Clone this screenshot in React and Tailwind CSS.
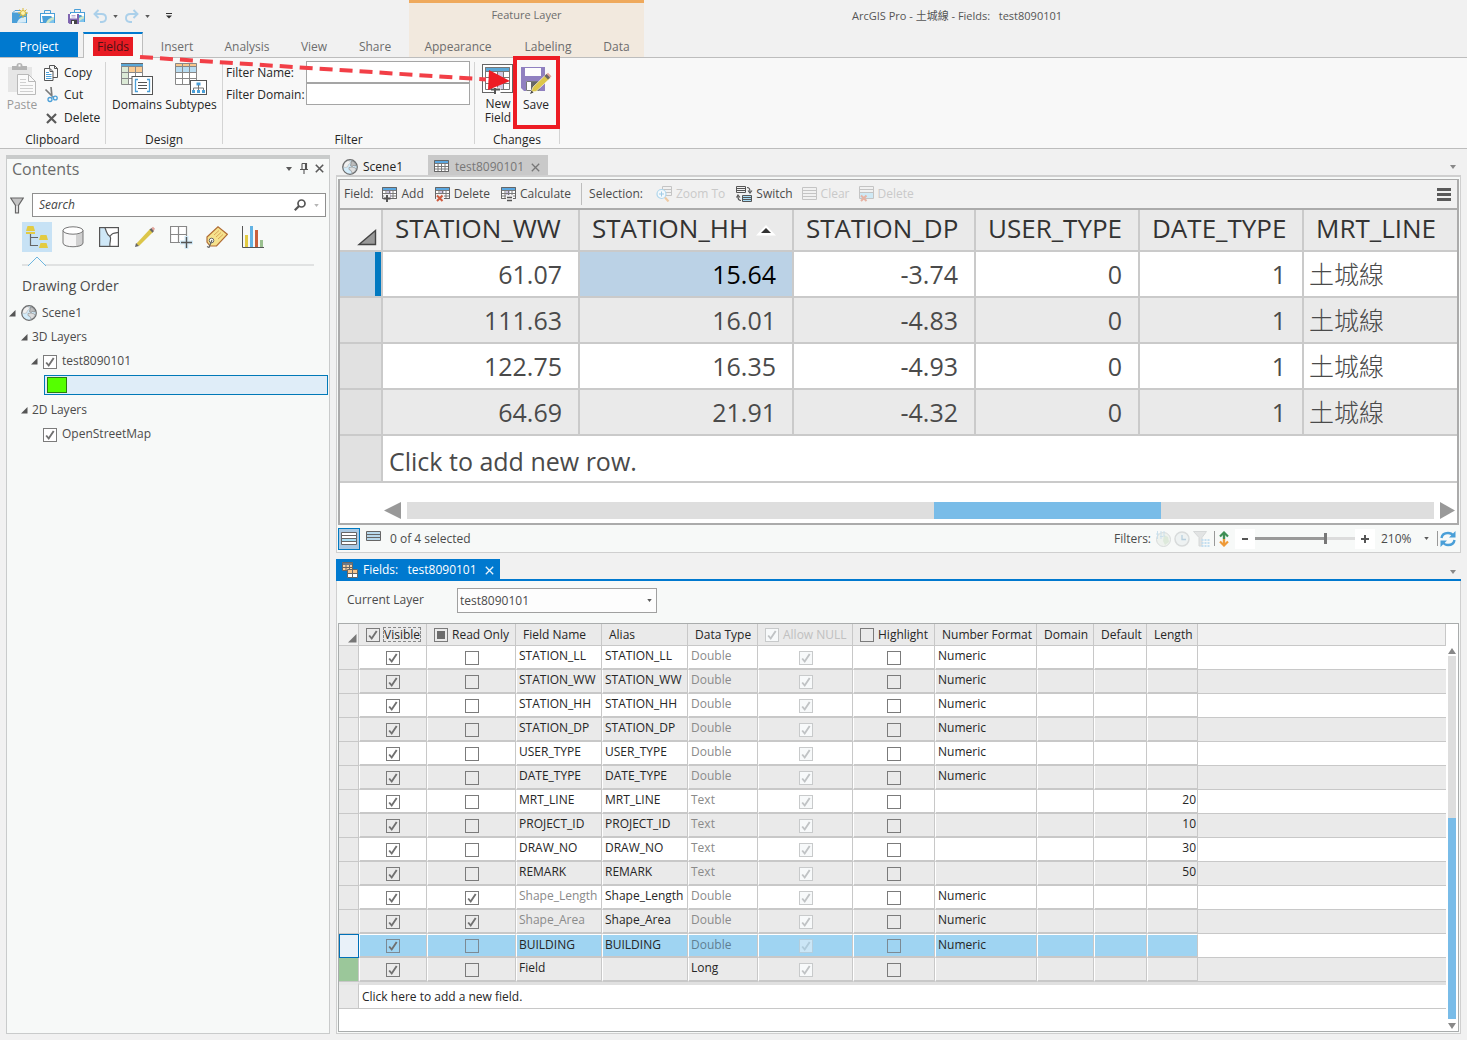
import React from "react";

const Svg = ({ w = 16, h = 16, vw = w, vh = h, className = "", children }) => (
  <svg width={w} height={h} viewBox={`0 0 ${vw} ${vh}`} className={`shrink-0 ${className}`} fill="none" aria-hidden="true">
    {children}
  </svg>
);

const Caret = ({ color = "#5a5a5a", w = 6, h = 4 }) => (
  <Svg w={w} h={h} vw={6} vh={4}>
    <path d="M0 0h6L3 4z" fill={color} />
  </Svg>
);

const Close = ({ color = "#5a5a5a", size = 9, stroke = 1.6 }) => (
  <Svg w={size} h={size} vw={9} vh={9}>
    <path d="M.8.8l7.4 7.4M8.2.8L.8 8.2" stroke={color} strokeWidth={stroke} />
  </Svg>
);

/* ---------- quick access icons ---------- */
const Briefcase = ({ x = 0, y = 0 }) => (
  <g transform={`translate(${x} ${y})`}>
    <path d="M4.500 4V1.500h6V4" stroke="#4a9fd8" />
    <rect x=".5" y="4.500" width="14" height="9" fill="#fff" stroke="#4a9fd8" />
    <path d="M2 7h9l3 3v3.500H3z" fill="#4a9fd8" />
    <path d="M6 14c1-3.500 4-5 8-6v6z" fill="#cfe6c8" />
    <path d="M9 14c1-2 3-3 5-3.500V14z" fill="#7fc4ec" />
  </g>
);
const NewProject = () => (
  <Svg>
    <rect x=".5" y="5" width="14" height="9.500" fill="#4a9fd8" stroke="#4a9fd8" />
    <path d="M1 4.500l2-2h5" stroke="#4a9fd8" />
    <path d="M5 15c1-4 4-6 9-6v5.500z" fill="#d6ebf7" />
    <path d="M11 0v10M6 5h10M7.500 1.500l7 7M14.500 1.500l-7 7" stroke="#d9b93a" />
    <circle cx="11" cy="5" r="2.500" fill="#fdf3b0" stroke="#d9b93a" />
  </Svg>
);
const OpenProject = () => (
  <Svg>
    <Briefcase y={1} />
  </Svg>
);
const SaveProject = () => (
  <Svg w={17}>
    <Briefcase x={2} y={0} />
    <path d="M0 6h11v10H1.500L0 14.500z" fill="#8066b0" />
    <path d="M2 6h7v4.500H2z" fill="#fff" />
    <path d="M3.500 7.500h4M3.500 9h4" stroke="#b9aed4" />
    <path d="M3 12h6v4H3z" fill="#444" />
    <path d="M4 13h2v3H4z" fill="#fff" />
  </Svg>
);
const Undo = ({ flip }) => (
  <Svg w={14} h={14} className={flip ? "-scale-x-100" : ""}>
    <path d="M5.500 1L1.500 5l4 4M2 5h6.500c3 0 4.500 1.800 4.500 4s-1.500 3.800-4 4H7" stroke="#abd0ea" strokeWidth="1.900" />
  </Svg>
);

/* ---------- ribbon icons ---------- */
const PasteIcon = () => (
  <Svg w={28} h={32}>
    <rect x="0" y="4" width="24" height="25" fill="#e6e6e6" />
    <path d="M4 7V3h4.500a3 3 0 0 1 6 0H19v4z" fill="#b4b4b4" />
    <rect x="10.500" y="1.500" width="2" height="2" fill="#fff" />
    <path d="M9.500 11.500h11l7 7v13h-18z" fill="#fafafa" stroke="#b9b9b9" />
    <path d="M20.500 11.500v7h7" stroke="#b9b9b9" />
    <path d="M12 16.500h6M12 19.500h6M12 22.500h13M12 25.500h13M12 28.500h13" stroke="#cfcfcf" />
  </Svg>
);
const CopyIcon = () => (
  <Svg w={14} h={16}>
    <path d="M5.500 12.500V.500h5l3 3v9z" fill="#f8f8f8" stroke="#555" />
    <path d="M10.500.500v3h3" stroke="#555" />
    <path d="M.500 15.500v-12h5.500l3 3v9z" fill="#fff" stroke="#555" />
    <path d="M6 3.500v3h3" stroke="#555" />
    <path d="M2 7.500h3M2 9.500h5.500M2 11.500h5.500M2 13.500h5.500" stroke="#4a9fd8" />
  </Svg>
);
const CutIcon = () => (
  <Svg w={14} h={16}>
    <path d="M1.500 2.500l8 8M7 0l.8 8" stroke="#7b7b7b" strokeWidth="1.700" />
    <circle cx="6" cy="12.500" r="2" stroke="#4a9fd8" strokeWidth="1.300" />
    <circle cx="11.300" cy="11" r="1.900" stroke="#4a9fd8" strokeWidth="1.300" />
    <path d="M7.500 10.500l1.500-1.500" stroke="#4a9fd8" />
  </Svg>
);
const DomainsIcon = () => (
  <Svg w={32} h={32}>
    <rect x=".5" y="3" width="21" height="18.500" fill="#fff" />
    <path d="M1 4h7v17H1z" fill="#dcead6" />
    <path d="M8 4h13v5H8z" fill="#f9cb94" />
    <path d="M0 0h22v4H0z" fill="#5aa7d6" />
    <path d="M.500 3.500h21v18H.500zM.500 9.500h21M.500 15.500h21M7.500 4v17.500M14.500 4v17.500" stroke="#888" />
    <path d="M0 .500h22" stroke="#666" />
    <rect x="11" y="13.500" width="20.500" height="18" fill="#fff" stroke="#555" />
    <path d="M17 16.500h-2.500v12H17M26 16.500h2.500v12H26" stroke="#4a9fd8" strokeWidth="1.300" />
    <path d="M17 19.500h9M17 22.500h9M17 25.500h9" stroke="#555" />
  </Svg>
);
const SubtypesIcon = () => (
  <Svg w={32} h={32}>
    <rect x=".5" y=".5" width="21" height="21" fill="#fff" />
    <path d="M0 0h22v4H0z" fill="#f9c78b" />
    <path d="M1 4h20v5H1z" fill="#b8dcf1" />
    <path d="M.500 .500h21v21H.500zM.500 3.500h21M.500 9.500h21M.500 15.500h21M7.500 0v21.500M14.500 0v21.500" stroke="#888" />
    <rect x="15.500" y="17.500" width="16" height="14" fill="#fff" stroke="#555" />
    <path d="M21.500 19.500h4v3h-4z" fill="#4a9fd8" />
    <path d="M23.500 22v5M18.500 27.500v-2.500h10v2.500" stroke="#777" />
    <path d="M17 27h3v3h-3zM22 27h3v3h-3zM27 27h3v3h-3z" fill="#4a9fd8" />
  </Svg>
);
const NewFieldIcon = () => (
  <Svg w={32} h={32}>
    <rect x=".5" y="1.500" width="30" height="28" fill="#fff" stroke="#666" />
    <path d="M3 4h25v4H3z" fill="#5aa7d6" />
    <path d="M16 8h6v18h-6z" fill="#d0c9e2" />
    <path d="M3.500 4.500h24v22h-24zM3.500 8.500h24M3.500 14.500h24M3.500 20.500h24M9.500 8v18M15.500 8v18M21.500 8v18" stroke="#777" />
    <path d="M12.500 24.500h6v7h-6z" fill="#fff" />
    <path d="M13 25v6M9 26.500h9" stroke="#555" strokeWidth="2" />
  </Svg>
);
const SaveIcon = () => (
  <Svg w={32} h={32}>
    <path d="M1 4h24v24H4l-3-3z" fill="#9080c0" />
    <path d="M5 5h16v8H5z" fill="#fdfdfd" />
    <path d="M6 18h14v10H6z" fill="#fdfdfd" />
    <path d="M6.500 18.500h13V27.500h-13z" stroke="#777" />
    <path d="M11 19h8v8h-8z" fill="#666" />
    <path d="M11 29l2-5L26.500 11l4 4L16 28.500z" fill="#dcc64a" stroke="#fff" strokeWidth=".6" />
    <path d="M26 11.500l2-1.800 3.500 3.500-2 2z" fill="#e2a49b" />
    <path d="M24.500 13l2-2 3.500 3.500-2 2z" fill="#666" />
    <path d="M10 31l1.500-3.500 2 2z" fill="#444" />
  </Svg>
);

/* ---------- globe & contents icons ---------- */
const Globe = ({ size = 16 }) => (
  <Svg w={size} h={size} vw={16} vh={16}>
    <circle cx="8" cy="8" r="7.300" fill="#d3ecfa" />
    <path d="M3 3.500l3-2 2 .500.500 2-2 1.500-1 2.500-2.500.5-2-1z" fill="#f0f0f0" stroke="#aaa" strokeWidth=".5" />
    <path d="M9.500 2l2.500.800 2 2.700-.500 1.500-2-.500-1.500 1-1.500-1 .500-2z" fill="#bdbdbd" stroke="#777" strokeWidth=".6" />
    <path d="M7 8.500l3-.500 3.500 1 .500 1.500-2 3-2 .500-1-2.500-2-1z" fill="#dedede" stroke="#888" strokeWidth=".6" />
    <circle cx="8" cy="8" r="7.300" stroke="#6b6b6b" strokeWidth="1.200" />
  </Svg>
);
const FilterIcon = () => (
  <Svg w={14} h={17}>
    <path d="M.700 1h12.600L8.500 8.500V16h-3V8.500z" fill="#c4c4c4" stroke="#666" strokeWidth="1.200" />
    <path d="M6.500 9h1v6h-1z" fill="#fff" />
  </Svg>
);
const DrawingOrderIcon = () => (
  <Svg w={22} h={22}>
    <path d="M1.500 0h6l1.500 5H0zM0 6h9v2H0zM14.500 9h6l1.500 5h-9zM14.500 17h6l1.500 5h-9z" fill="#e3cb42" />
    <path d="M4.500 8v11.500H12M4.500 11.500H12" stroke="#666" strokeWidth="1.200" />
  </Svg>
);
const CylinderIcon = () => (
  <Svg w={22} h={22}>
    <path d="M1 5v12c0 5 20 5 20 0V5z" fill="#f6f6f6" />
    <path d="M14 8.500c4-.5 7-1.500 7-3.500v12c0 2-3 3.300-7 3.700z" fill="#d0d0d0" />
    <ellipse cx="11" cy="4.500" rx="10" ry="3.700" fill="#fff" stroke="#777" />
    <path d="M1 4.500V17c0 5 20 5 20 0V4.500" stroke="#777" />
  </Svg>
);
const SelectionIcon = () => (
  <Svg w={20} h={22}>
    <rect x=".600" y="1.600" width="18.800" height="18.800" fill="#fff" />
    <path d="M1 2h5c2 4 1 6 5 8.500 2 2-1 6 0 9.500H1z" fill="#cfe8f7" />
    <path d="M6 2c2 4 1 6 5 8.500 2 2-1 6 0 9.500M11 10.500C13 7 15 7 19 6.500" stroke="#555" strokeWidth="1.200" />
    <rect x=".600" y="1.600" width="18.800" height="18.800" stroke="#555" strokeWidth="1.200" />
  </Svg>
);
const PencilIcon = () => (
  <Svg w={20} h={22}>
    <path d="M1 18L15 3l3 3L4 20z" fill="#dcc64a" />
    <path d="M14.500 3.500l2-1.500 2.700 2.700-1.700 2z" fill="#666" />
    <path d="M16.500 2l1.500-1.300 2 2.100L18.500 5z" fill="#e2a49b" />
    <path d="M0 21l1-4 3 3z" fill="#666" />
  </Svg>
);
const SnappingIcon = () => (
  <Svg w={23} h={23}>
    <path d="M.500.500h16v16H.500zM8.500.500v16M.500 8.500h16" fill="#fff" stroke="#888" strokeWidth="1.200" />
    <path d="M16.500 10v13M10 16.500h13" stroke="#d3ecfa" strokeWidth="4" />
    <path d="M16.500 11v11M11 16.500h11" stroke="#555" strokeWidth="1.400" />
  </Svg>
);
const LabelIcon = () => (
  <Svg w={22} h={22}>
    <path d="M1 11L12 .800l9.300 7.500L10.500 20H4l-3-4z" fill="#f6e28c" stroke="#b06c34" strokeWidth="1.200" />
    <path d="M8 9l5-4.500M10 11l5-4.500M12 13l5-4.500" stroke="#d9a75c" />
    <circle cx="5.500" cy="14.500" r="2.300" fill="#fff" stroke="#666" />
    <path d="M6 14l-3 7.500-2-1" stroke="#666" strokeWidth="1.200" />
  </Svg>
);
const ChartIcon = () => (
  <Svg w={22} h={22}>
    <path d="M.500 0v21.500H22" stroke="#555" />
    <path d="M3 9h3v12H3z" fill="#e3cb42" />
    <path d="M8 0h3v21H8z" fill="#62b3e4" />
    <path d="M13 4h3v17h-3z" fill="#c8603c" />
    <path d="M18 14h3v7h-3z" fill="#9ac08f" />
  </Svg>
);

/* ---------- table toolbar icons ---------- */
const MiniTable = ({ children, tinted }) => (
  <Svg w={16} h={16}>
    <path d="M.500 1.500h14v11H.500z" fill="#fff" />
    {tinted && <path d="M5 5h4v7H5z" fill="#cbc4e0" />}
    <path d="M.500 4.500h14v8H.500zM.500 7.500h14M.500 10h14M4 4.500v8M7.500 4.500v8M11 4.500v8" stroke="#7a7a7a" />
    <path d="M0 1h15v3H0z" fill="#5aa7e0" />
    <path d="M.500 1.500h14v11H.500z" stroke="#666" />
    {children}
  </Svg>
);
const AddIcon = () => (
  <MiniTable tinted>
    <path d="M2 8h6v8H2z" fill="#f0f0f0" />
    <path d="M5 9v7M1.500 12.500h7" stroke="#555" strokeWidth="2" />
  </MiniTable>
);
const DelIcon = () => (
  <MiniTable tinted>
    <path d="M1 8h8v8H1z" fill="#f0f0f0" />
    <path d="M2 9.500l5.500 5.500M7.500 9.500L2 15" stroke="#cf5b3f" strokeWidth="2" />
  </MiniTable>
);
const CalcIcon = () => (
  <MiniTable tinted>
    <path d="M5 9h7v7H5z" fill="#f0f0f0" />
    <path d="M6 11.500h5M6 14.500h5" stroke="#555" strokeWidth="1.500" />
  </MiniTable>
);
const ZoomToIcon = () => (
  <Svg w={17} h={16}>
    <path d="M6.500.500h9v9h-9zM7 3.500h8M7 6.500h8" stroke="#c4c4c4" />
    <circle cx="5.500" cy="8" r="4.500" fill="#f4f9fc" stroke="#b0d6ec" strokeWidth="1.200" />
    <path d="M5.500 5.500v5M3 8h5" stroke="#9fcbe6" />
    <path d="M9 11.500l3.500 4" stroke="#eec9a2" strokeWidth="2" />
  </Svg>
);
const SwitchIcon = () => (
  <Svg w={17} h={16}>
    <path d="M.500.500h9v6h-9zM.500 2.500h9M.500 4.500h9" stroke="#555" />
    <path d="M6.500 9.500h9v6h-9z" fill="#a9dcf4" stroke="#555" />
    <path d="M6.500 11.500h9M6.500 13.500h9" stroke="#555" />
    <path d="M11 1.500c2 0 3 1 3 4M12 4.500l2 2.500 2-2.500M5 14.500c-2 0-3-1-3-4M.500 11.500L2 9l2 2.500" stroke="#555" strokeWidth="1.200" />
  </Svg>
);
const ClearIcon = () => (
  <Svg w={16} h={14}>
    <path d="M.500.500h14v12H.500zM.500 3.500h14M.500 6.500h14M.500 9.500h14" stroke="#c4c4c4" />
  </Svg>
);
const DelRowsIcon = () => (
  <Svg w={16} h={16}>
    <path d="M1 7h14v5H1z" fill="#cfe9f5" />
    <path d="M.500.500h14v12H.500zM.500 3.500h14M.500 6.500h14" stroke="#c4c4c4" />
    <path d="M2 9.500l5.500 5.500M7.500 9.500L2 15" stroke="#e6b3a4" strokeWidth="2" />
  </Svg>
);
const FieldsTabIcon = () => (
  <Svg w={16} h={16}>
    <path d="M.500.500h10v8H.500z" fill="#f7d2a6" stroke="#666" />
    <path d="M1 1h9v2H1z" fill="#6a7a8a" />
    <path d="M.500 5.500h10M4 3v6M7.500 3v6" stroke="#666" />
    <path d="M5.500 7.500h10v8h-10z" fill="#fff" stroke="#666" />
    <path d="M6 8h9v3.500H6z" fill="#f7c38a" />
    <path d="M5.500 11.500h10M10.500 8v7" stroke="#666" />
  </Svg>
);

const TreeArrow = () => (
  <Svg w={7} h={7}>
    <path d="M6.500 0v6.500H0z" fill="#555" />
  </Svg>
);

const Check = ({ checked, disabled, label, mixed, dim, id, clear, className = "" }) => (
  <span className={`inline-grid shrink-0 ${className}`}>
    <input
      id={id}
      type="checkbox"
      aria-label={label}
      defaultChecked={checked}
      disabled={disabled}
      className={`col-start-1 row-start-1 m-0 size-3.5 appearance-none border ${disabled ? "border-[#c8cacb] bg-[#f7f9fa]" : dim ? "border-[#7c8a94]" : clear ? "border-[#7b7b7b]" : "border-[#7b7b7b] bg-white"}`}
    />
    {(checked || mixed) && (
      <svg width="14" height="14" viewBox="0 0 14 14" fill="none" className="pointer-events-none col-start-1 row-start-1" aria-hidden="true">
        {mixed ? (
          <path d="M3 3h8v8H3z" fill="#6b6b6b" />
        ) : (
          <path d="M3.200 7.500l2.500 3 5-7.500" stroke={disabled ? "#c0c3c5" : "#707070"} strokeWidth="1.900" />
        )}
      </svg>
    )}
  </span>
);

const RibbonGroup = ({ label, className = "", children }) => (
  <section className={`my-1 flex flex-col justify-between border-r border-[#d4d4d4] ${className}`}>
    <div className="flex">{children}</div>
    <div className="-mb-1 text-center leading-4">{label}</div>
  </section>
);

const tabs = [
  ["Insert", "w-[68px]"],
  ["Analysis", "w-[72px]"],
  ["View", "w-[62px]"],
  ["Share", "w-[60px]"],
];
const layerTabs = [
  ["Appearance", "w-[98px]"],
  ["Labeling", "w-[82px]"],
  ["Data", "w-[55px]"],
];

function Header() {
  return (
    <header className="relative">
      <div className="flex h-[58px] border-b border-[#bdbdbd]">
        <div className="flex w-[409px] shrink-0 flex-col">
          <div className="flex h-8 shrink-0 items-center pl-3">
            <button aria-label="New project"><NewProject /></button>
            <button aria-label="Open project" className="ml-3"><OpenProject /></button>
            <button aria-label="Save project" className="ml-3"><SaveProject /></button>
            <button aria-label="Undo" className="ml-2"><Undo /></button>
            <button aria-label="Undo list" className="ml-1.5"><Caret w={5} h={3} /></button>
            <button aria-label="Redo" className="ml-[7px]"><Undo flip /></button>
            <button aria-label="Redo list" className="ml-1.5"><Caret w={5} h={3} /></button>
            <button aria-label="Customize" className="ml-4">
              <Svg w={6} h={6}><path d="M0 .500h6" stroke="#333" /><path d="M0 2.500h6L3 5.500z" fill="#333" /></Svg>
            </button>
          </div>
          <nav className="-mb-px flex h-[26px] shrink-0 text-[#6d6d6d]">
            <button className="mr-[5px] mb-px w-[78px] bg-[#0079cf] pt-1 text-white">Project</button>
            <button className="w-[60px] border-x border-t-2 border-x-[#bdbdbd] border-t-[#0079cf] bg-[#f8f8f8] pt-0.5">
              <span className="bg-[#e81b23] px-1 py-px text-[#4a1216]">Fields</span>
            </button>
            {tabs.map(([t, w]) => (
              <button key={t} className={`${w} pt-[3px]`}>{t}</button>
            ))}
          </nav>
        </div>
        <div className="flex w-[235px] shrink-0 flex-col border-t-[3px] border-[#efa95c] bg-[#f2e9de] text-[#6d6d6d]">
          <div className="h-[29px] pt-1 text-center text-[11px] leading-4">Feature Layer</div>
          <nav className="flex h-[25px]">
            {layerTabs.map(([t, w]) => (
              <button key={t} className={`${w} pt-1`}>{t}</button>
            ))}
          </nav>
        </div>
        <div className="flex-1 pt-2 pl-[208px] text-[11px] leading-4 whitespace-pre text-[#555]">{"ArcGIS Pro - 土城線 - Fields:   test8090101"}</div>
      </div>

      <div className="flex h-[91px] border-b border-[#bdbdbd] bg-[#f8f8f8] text-[#262626]">
        <RibbonGroup label="Clipboard" className="w-[106px]">
          <button className="flex w-11 flex-col items-center pt-px leading-4 text-[#9a9a9a]">
            <PasteIcon />
            <span className="mt-0.5">Paste</span>
          </button>
          <div className="flex flex-col">
            <button className="flex h-[22px] items-center gap-1.5"><CopyIcon />Copy</button>
            <button className="flex h-[22px] items-center gap-1.5"><CutIcon />Cut</button>
            <button className="flex h-6 items-center gap-1.5 pl-0.5"><Close size={11} stroke={1.8} /><span className="pl-px">Delete</span></button>
          </div>
        </RibbonGroup>
        <RibbonGroup label="Design" className="w-[117px]">
          <button className="ml-[5px] flex w-[52px] flex-col items-center pt-px leading-4"><DomainsIcon /><span className="mt-0.5">Domains</span></button>
          <button className="flex w-14 flex-col items-center pt-px leading-4"><SubtypesIcon /><span className="mt-0.5">Subtypes</span></button>
        </RibbonGroup>
        <RibbonGroup label="Filter" className="w-[252px]">
          <div className="-mt-px grid grid-cols-[80px_164px] pl-[3px]">
            <label htmlFor="fname" className="self-center pt-0.5">Filter Name:</label>
            <input id="fname" className="h-[22px] border border-[#a5a5a5] bg-white px-1 outline-none" />
            <label htmlFor="fdomain" className="self-center pt-0.5">Filter Domain:</label>
            <input id="fdomain" className="h-[22px] border border-[#a5a5a5] bg-white px-1 outline-none" />
          </div>
        </RibbonGroup>
        <RibbonGroup label="Changes" className="w-[85px]">
          <button className="ml-1 flex w-[38px] flex-col items-center pt-px leading-[14px]">
            <NewFieldIcon />
            <span className="mt-0.5">New<br />Field</span>
          </button>
          <button className="flex w-[38px] flex-col items-center pt-px leading-4"><SaveIcon /><span className="mt-0.5">Save</span></button>
        </RibbonGroup>
      </div>

      <svg width="580" height="140" viewBox="0 0 580 140" fill="none" className="pointer-events-none absolute top-0 left-0" aria-hidden="true">
        <path d="M140 57L486 79.500" stroke="#f23f47" strokeWidth="4" strokeDasharray="13 7" />
        <path d="M489 70l21 11-22 9z" fill="#ed1c24" />
        <rect x="515" y="58" width="43" height="69" stroke="#ed1c24" strokeWidth="4" />
      </svg>
    </header>
  );
}

const TreeLabel = ({ children }) => <span className="text-[#4b4b4b]">{children}</span>;

function Contents() {
  return (
    <aside className="w-[324px] shrink-0 border border-t-4 border-[#c9cbcb] bg-[#f7f9f8]">
      <div className="flex h-[34px] items-start justify-between pr-[5px]">
        <h2 className="pl-[5px] text-base leading-5 text-[#6b6b6b]">Contents</h2>
        <div className="flex items-center gap-[7px] pt-1">
          <button aria-label="Panel options"><Caret w={8} h={4} /></button>
          <button aria-label="Pin">
            <Svg w={8} h={11}><path d="M2 .500h4.500v6M2 .500v6M0 6.500h8M4 7v4M5.500 1v5.500" stroke="#555" strokeWidth="1.100" /></Svg>
          </button>
          <button aria-label="Close panel"><Close /></button>
        </div>
      </div>
      <div className="flex h-6 items-center gap-2 pr-[3px] pl-[3px]">
        <FilterIcon />
        <div className="flex h-6 flex-1 items-center gap-2 border border-[#8f8f8f] bg-white pr-1.5 pl-1.5">
          <input aria-label="Search" placeholder="Search" className="w-full min-w-0 flex-1 bg-transparent italic outline-none placeholder:text-[#444]" />
          <Svg w={12} h={12}><circle cx="7.500" cy="4.500" r="3.500" stroke="#555" strokeWidth="1.700" /><path d="M5 7L.800 11.200" stroke="#555" strokeWidth="2.200" /></Svg>
          <Caret color="#b5b5b5" w={5} h={3} />
        </div>
      </div>
      <div className="mt-[5px] ml-[15px] flex w-[292px] gap-1.5 border-b-2 border-[#e0e2e2] pb-3">
        <button aria-label="Drawing order" className="relative flex h-[30px] w-[30px] items-center justify-center bg-[#c7e2f5]">
          <DrawingOrderIcon />
          <Svg w={20} h={11} className="absolute top-[34px] left-[5px]"><path d="M1 10L10 1l9 9" fill="#f7f9f8" stroke="#6db6df" /></Svg>
        </button>
        {[["Source", CylinderIcon], ["Selection", SelectionIcon], ["Editing", PencilIcon], ["Snapping", SnappingIcon], ["Labeling", LabelIcon], ["Charts", ChartIcon]].map(([n, I]) => (
          <button key={n} aria-label={n} className="flex h-[30px] w-[30px] items-center justify-center"><I /></button>
        ))}
      </div>
      <h3 className="mt-2.5 pl-[15px] text-sm leading-5 text-[#4b4b4b]">Drawing Order</h3>
      <ul className="mt-[5px]">
        <li className="flex h-6 items-center gap-[5px] pl-0.5"><TreeArrow /><Globe /><TreeLabel>Scene1</TreeLabel></li>
        <li className="flex h-6 items-center gap-1 pl-3.5"><TreeArrow /><TreeLabel>3D Layers</TreeLabel></li>
        <li className="flex h-6 items-center gap-[5px] pl-6"><TreeArrow /><Check id="lyr1" checked className="mt-0.5" /><label htmlFor="lyr1" className="text-[#4b4b4b]">test8090101</label></li>
        <li className="flex h-[25px] items-start pt-0.5 pr-px pl-[37px]">
          <div className="flex h-5 flex-1 items-center border border-[#0079b8] bg-[#dfedf8] pl-0.5">
            <span className="h-4 w-5 border border-[#2b7a10] bg-[#55ff00]" />
          </div>
        </li>
        <li className="flex h-6 items-center gap-1 pl-3.5"><TreeArrow /><TreeLabel>2D Layers</TreeLabel></li>
        <li className="flex h-6 items-center gap-[5px] pl-9"><Check id="lyr2" checked className="mt-0.5" /><label htmlFor="lyr2" className="text-[#4b4b4b]">OpenStreetMap</label></li>
      </ul>
    </aside>
  );
}

const rows = [
  ["61.07", "15.64", "-3.74", "0", "1", "土城線"],
  ["111.63", "16.01", "-4.83", "0", "1", "土城線"],
  ["122.75", "16.35", "-4.93", "0", "1", "土城線"],
  ["64.69", "21.91", "-4.32", "0", "1", "土城線"],
];
const heads = ["STATION_WW", "STATION_HH", "STATION_DP", "USER_TYPE", "DATE_TYPE", "MRT_LINE"];

const Tool = ({ icon, children, disabled, className = "" }) => (
  <button disabled={disabled} className={`flex items-center gap-[3px] ${disabled ? "text-[#c9c9c9]" : "text-[#4b4b4b]"} ${className}`}>
    {icon}
    {children}
  </button>
);

function TablePane() {
  return (
    <section>
      <div className="flex h-5 items-end justify-between">
        <div className="flex h-5">
          <button className="flex w-[92px] items-center gap-[5px] pt-1 pl-1.5 text-[#222]"><Globe />Scene1</button>
          <div className="flex w-[120px] items-center gap-[5px] bg-[#c9c9c9] pt-1 pl-1.5 text-[#777]">
            <MiniTable />
            <span>test8090101</span>
            <button aria-label="Close test8090101" className="ml-0.5"><Close color="#777" stroke={1.3} /></button>
          </div>
        </div>
        <button aria-label="Tab list" className="mr-1 mb-1.5"><Caret color="#888" w={8} h={4} /></button>
      </div>
      <div className="border border-t-2 border-[#cfcfcf] bg-[#f7f9f8] px-px pt-0.5">
        <div className="border-2 border-t border-[#ababab] bg-white">
          <div className="flex h-[30px] items-center border-b-2 border-[#ababab] bg-[#f1f1f1] pr-1.5 pl-1 text-[#4b4b4b]">
            <span>Field:</span>
            <Tool icon={<AddIcon />} className="ml-[9px]">Add</Tool>
            <Tool icon={<DelIcon />} className="ml-[11px]">Delete</Tool>
            <Tool icon={<CalcIcon />} className="ml-[11px]">Calculate</Tool>
            <span className="ml-2.5 h-[22px] w-px bg-[#bdbdbd]" />
            <span className="ml-[7px]">Selection:</span>
            <Tool icon={<ZoomToIcon />} className="ml-[13px]" disabled>Zoom To</Tool>
            <Tool icon={<SwitchIcon />} className="ml-[11px]">Switch</Tool>
            <Tool icon={<ClearIcon />} className="ml-[9px]" disabled>Clear</Tool>
            <Tool icon={<DelRowsIcon />} className="ml-[9px]" disabled>Delete</Tool>
            <button aria-label="Menu" className="ml-auto">
              <Svg w={14} h={13}><path d="M0 1.500h14M0 6.500h14M0 11.500h14" stroke="#5a5a5a" strokeWidth="3" /></Svg>
            </button>
          </div>
          <table className="w-full table-fixed border-separate border-spacing-0 text-[25px] leading-8 text-[#4a4a4a]">
            <colgroup>
              <col className="w-[43px]" /><col className="w-[197px]" /><col className="w-[214px]" /><col className="w-[182px]" />
              <col className="w-[164px]" /><col className="w-[164px]" /><col />
            </colgroup>
            <thead>
              <tr className="h-[42px] bg-[#eaeaea] text-[26px] text-[#333]">
                <th aria-label="Select all" className="border-r-2 border-b-2 border-[#cacaca] bg-[#f1f1f1] p-0 align-bottom">
                  <Svg w={20} h={17} className="mr-1 mb-1 ml-auto"><path d="M18.500 1.500v14H2z" fill="#999" stroke="#444" strokeWidth="1.400" /></Svg>
                </th>
                {heads.map((h, i) => (
                  <th key={h} className={`overflow-hidden border-b-2 border-[#cacaca] p-0 pb-1 pl-3 font-normal whitespace-nowrap ${i < 5 ? "border-r-2" : ""}`}>
                    <div className="flex items-center gap-2">
                      {h}
                      {i === 1 && <Svg w={20} h={11} className="mt-1"><path d="M0 10.500L10 0l10 10.500z" fill="#fff" /><path d="M5 8h10l-5-5z" fill="#333" /></Svg>}
                    </div>
                  </th>
                ))}
              </tr>
            </thead>
            <tbody>
              {rows.map((r, i) => (
                <tr key={i} className={i % 2 ? "h-[46px] bg-[#eaeaea]" : "h-[46px] bg-white"}>
                  <td className="border-r-2 border-b-2 border-[#cacaca] bg-[#e1e1e1] p-0">
                    {i === 0 && <div className="h-11 border-r-[6px] border-[#0079c1] bg-[#bbd2e6]" />}
                  </td>
                  {r.map((c, j) => (
                    <td
                      key={j}
                      className={`overflow-hidden border-b-2 border-[#cacaca] py-0 whitespace-nowrap ${j < 5 ? "border-r-2 pr-4 text-right" : "pl-[5px] font-light"} ${i === 0 && j === 1 ? "bg-[#bbd2e6] text-black" : ""}`}
                    >
                      {c}
                    </td>
                  ))}
                </tr>
              ))}
              <tr className="h-[47px]">
                <td className="border-r-2 border-b-2 border-[#cacaca] bg-[#e1e1e1] p-0" />
                <td colSpan={6} className="border-b-2 border-[#cacaca] py-0 pt-1 pl-1.5">Click to add new row.</td>
              </tr>
            </tbody>
          </table>
          <div className="flex h-10 items-center gap-1.5 pt-[15px] pr-0.5 pl-11">
            <button aria-label="Scroll left"><Svg w={17} h={17}><path d="M17 0v17L0 8.500z" fill="#999" /></Svg></button>
            <div className="flex h-[17px] flex-1 bg-[#dedede]">
              <div className="w-[51.3%]" />
              <div className="w-[22.1%] bg-[#79bce8]" />
            </div>
            <button aria-label="Scroll right"><Svg w={15} h={17}><path d="M0 0v17l15-8.500z" fill="#999" /></Svg></button>
          </div>
        </div>
        <div className="flex h-[27px] items-center pr-[3px] text-[#4b4b4b]">
          <button aria-label="Show all records" className="flex size-[22px] items-center justify-center border border-[#0079c1] bg-[#a9c8e2]">
            <Svg w={16} h={14}><path d="M.500.500h15v12H.500z" fill="#fff" stroke="#666" /><path d="M1 7h14v2H1z" fill="#a9e0f4" /><path d="M.500 3.500h15M.500 6.500h15M.500 9.500h15" stroke="#666" /></Svg>
          </button>
          <button aria-label="Show selected records" className="mr-[9px] ml-1.5 pb-[5px]">
            <Svg w={15} h={11}><path d="M.500.500h14v9H.500z" fill="#b8d8ec" stroke="#666" /><path d="M.500 3.500h14M.500 6.500h14" stroke="#666" /></Svg>
          </button>
          <span>0 of 4 selected</span>
          <span className="ml-auto">Filters:</span>
          <div className="ml-1 flex items-center gap-[3px]">
            <Svg><circle cx="8.500" cy="8.500" r="7" fill="#eef2ee" stroke="#d8dbdb" /><path d="M9 4l4 2 1 5-4 3-2-4z" fill="#dde9db" /><path d="M2.500 0v8M6 0v8M9 0v6M1 3h3M5 5.500h3" stroke="#cbe0ec" /></Svg>
            <Svg><circle cx="8" cy="8" r="7" fill="#eef2f2" stroke="#d8dbdb" strokeWidth="1.500" /><path d="M8 4v4.500h4" stroke="#b9d0de" strokeWidth="1.300" /></Svg>
            <Svg w={17}><path d="M.500.500h13L9 6.500V15H6V6.500z" fill="#e2e4e4" stroke="#d5d8d8" /><path d="M9.500 8v8M12.500 8v8M15.500 8v8" stroke="#c4dff0" strokeWidth="2" strokeDasharray="2 1" /></Svg>
          </div>
          <span className="mx-1 h-[15px] w-px bg-[#999]" />
          <button aria-label="Extent">
            <Svg w={10} h={16}><path d="M5 2v6" stroke="#3f8f55" strokeWidth="2.400" /><path d="M1 5.500l4-4 4 4" stroke="#3f8f55" strokeWidth="2.200" /><path d="M5 8v6" stroke="#ee9a38" strokeWidth="2.400" /><path d="M1 10.500l4 4 4-4" stroke="#ee9a38" strokeWidth="2.200" /></Svg>
          </button>
          <button aria-label="Zoom out" className="ml-1.5 flex h-5 w-5 items-center justify-center bg-white"><Svg w={6} h={2}><path d="M0 1h6" stroke="#555" strokeWidth="2" /></Svg></button>
          <input
            type="range"
            aria-label="Zoom"
            defaultValue={71}
            className="h-4 w-[100px] appearance-none bg-transparent [&::-webkit-slider-runnable-track]:h-[3px] [&::-webkit-slider-runnable-track]:bg-[linear-gradient(to_right,#999_70%,#dcdcdc_70%)] [&::-webkit-slider-thumb]:-mt-1 [&::-webkit-slider-thumb]:h-[11px] [&::-webkit-slider-thumb]:w-[3px] [&::-webkit-slider-thumb]:appearance-none [&::-webkit-slider-thumb]:bg-[#777]"
          />
          <button aria-label="Zoom in" className="flex h-5 w-5 items-center justify-center bg-white"><Svg w={8} h={8}><path d="M0 4h8M4 0v8" stroke="#555" strokeWidth="2" /></Svg></button>
          <div className="relative ml-1.5 flex items-center">
            <select aria-label="Zoom level" className="w-[52px] appearance-none bg-transparent outline-none"><option>210%</option></select>
            <span className="pointer-events-none absolute right-1"><Caret w={5} h={3} /></span>
          </div>
          <span className="mr-0.5 ml-1 h-[15px] w-px bg-[#999]" />
          <button aria-label="Refresh">
            <Svg><path d="M1.500 7C2 3.500 5 2 8 2c2 0 4 .8 5 2.500M14.500 9c-.5 3.500-3.500 5-6.500 5-2 0-4-.8-5-2.500" stroke="#4a9fd8" strokeWidth="2.400" /><path d="M15.500 0v6.500H9zM.500 16V9.500H7z" fill="#4a9fd8" /></Svg>
          </button>
        </div>
      </div>
    </section>
  );
}

const N = "Numeric";
const fields = [
  ["STATION_LL", "Double", N, ""],
  ["STATION_WW", "Double", N, ""],
  ["STATION_HH", "Double", N, ""],
  ["STATION_DP", "Double", N, ""],
  ["USER_TYPE", "Double", N, ""],
  ["DATE_TYPE", "Double", N, ""],
  ["MRT_LINE", "Text", "", "20"],
  ["PROJECT_ID", "Text", "", "10"],
  ["DRAW_NO", "Text", "", "30"],
  ["REMARK", "Text", "", "50"],
  ["Shape_Length", "Double", N, "", "ro"],
  ["Shape_Area", "Double", N, "", "ro"],
  ["BUILDING", "Double", N, "", "sel"],
  ["Field", "Long", "", "", "new"],
];

const Th = ({ children, className = "" }) => (
  <th className={`overflow-hidden border-r border-b border-[#c8c8c8] p-0 font-normal whitespace-nowrap ${className}`}>{children}</th>
);

const Cell = ({ children, sel, box }) => (
  <td className={`overflow-hidden border-r border-b-2 border-l border-[#c8c8c8] p-0 whitespace-nowrap ${sel ? "border-t border-t-white border-l-white bg-[#9fd4f2]" : "border-l-white"}`}>
    <div className={`flex items-center ${sel ? "h-5" : "h-[21px]"} ${box ? "pt-px" : "pb-0.5"}`}>{children}</div>
  </td>
);

function FieldsPane() {
  return (
    <section className="mt-1.5 flex flex-1 flex-col">
      <div className="flex items-end justify-between border-b-2 border-[#0079cf]">
        <div className="flex h-5 w-[164px] items-center bg-[#0079cf] pt-0.5 pl-1.5 whitespace-pre text-white">
          <FieldsTabIcon />
          <span className="ml-[5px]">{"Fields:   test8090101"}</span>
          <button aria-label="Close fields" className="ml-2"><Close color="#e8f3fb" stroke={1.3} /></button>
        </div>
        <button aria-label="Tab list" className="mr-1 mb-[5px]"><Caret color="#888" w={8} h={4} /></button>
      </div>
      <div className="flex flex-1 flex-col border border-t-0 border-[#cfcfcf] bg-[#f7f9f8] px-px pb-px">
        <div className="flex h-[42px] items-start pt-[7px] pl-[9px] text-[#4b4b4b]">
          <label htmlFor="layer" className="w-[110px] leading-6">Current Layer</label>
          <div className="relative flex items-center">
            <select id="layer" className="h-[25px] w-[200px] appearance-none border border-[#a0a0a0] bg-[#fdfdfd] pl-0.5 outline-none"><option>test8090101</option></select>
            <span className="pointer-events-none absolute right-[5px]"><Caret w={5} h={3} /></span>
          </div>
        </div>
        <div className="flex flex-1 border border-[#a9acac] bg-white">
          <div className="min-w-0 flex-1">
            <table className="w-full table-fixed border-separate border-spacing-0 leading-4 text-[#262626]">
              <colgroup>
                <col className="w-[20px]" /><col className="w-[68px]" /><col className="w-[89px]" /><col className="w-[86px]" /><col className="w-[86px]" />
                <col className="w-[70px]" /><col className="w-[95px]" /><col className="w-[82px]" /><col className="w-[102px]" /><col className="w-[57px]" />
                <col className="w-[53px]" /><col className="w-[51px]" /><col />
              </colgroup>
              <thead>
                <tr className="h-[22px] bg-[#eaeaea]">
                  <Th className="bg-[#f1f1f1] align-bottom"><Svg w={9} h={9} className="mr-px mb-0.5 ml-auto"><path d="M8.500 0v8.500H0z" fill="#777" /></Svg></Th>
                  <Th><div className="flex items-center gap-1 pl-[7px]"><Check id="allv" checked clear /><label htmlFor="allv" className="leading-[13px] outline-1 outline-[#888] outline-dashed">Visible</label></div></Th>
                  <Th><div className="flex items-center gap-1 pl-[7px]"><Check id="allr" mixed clear /><label htmlFor="allr">Read Only</label></div></Th>
                  <Th className="pl-[7px] text-left">Field Name</Th>
                  <Th className="pl-[7px] text-left">Alias</Th>
                  <Th className="pl-[7px] text-left">Data Type</Th>
                  <Th><div className="flex items-center gap-1 pl-[7px] text-[#c0c0c0]"><Check id="alln" checked disabled /><label htmlFor="alln">Allow NULL</label></div></Th>
                  <Th><div className="flex items-center gap-1 pl-[7px]"><Check id="allh" clear /><label htmlFor="allh">Highlight</label></div></Th>
                  <Th className="pl-[7px] text-left">Number Format</Th>
                  <Th className="pl-[7px] text-left">Domain</Th>
                  <Th className="pl-[7px] text-left">Default</Th>
                  <Th className="pl-[7px] text-left">Length</Th>
                  <Th className="bg-[#f1f1f1]" />
                </tr>
              </thead>
              <tbody>
                {fields.map(([name, type, fmt, len, kind], i) => {
                  const sel = kind === "sel";
                  const grey = i % 2 === 1;
                  return (
                    <tr key={name} className={`h-6 ${grey ? "bg-[#eaeaea]" : "bg-white"}`}>
                      <td className={`p-0 ${sel ? "border border-[#0070b8] bg-[#e9f1f9]" : kind === "new" ? "border-r border-b border-[#c8c8c8] bg-[#9bc79a]" : "border-r border-b border-[#c8c8c8] bg-[#eaeaea]"}`} />
                      <Cell box sel={sel}><span className="mx-auto flex"><Check label={`${name} visible`} checked dim={sel} clear={grey} /></span></Cell>
                      <Cell box sel={sel}><span className="mx-auto flex"><Check label={`${name} read only`} checked={kind === "ro"} dim={sel} clear={grey} /></span></Cell>
                      <Cell sel={sel}><span className={`pl-0.5 ${kind === "ro" ? "text-[#8a8a8a]" : ""}`}>{name}</span></Cell>
                      <Cell sel={sel}><span className="pl-0.5">{kind === "new" ? "" : name}</span></Cell>
                      <Cell sel={sel}><span className={`pl-0.5 ${kind === "new" ? "" : sel ? "text-[#5f7f92]" : "text-[#8a8a8a]"}`}>{type}</span></Cell>
                      <Cell box sel={sel}><span className={`mx-auto flex ${sel ? "opacity-50" : ""}`}><Check label={`${name} allow null`} checked disabled /></span></Cell>
                      <Cell box sel={sel}><span className="mx-auto flex"><Check label={`${name} highlight`} dim={sel} clear={grey} /></span></Cell>
                      <Cell sel={sel}><span className="pl-0.5">{fmt}</span></Cell>
                      <Cell sel={sel} />
                      <Cell sel={sel} />
                      <Cell sel={sel}><span className="ml-auto pr-px">{len}</span></Cell>
                      <td className="border-b border-[#c8c8c8] p-0" />
                    </tr>
                  );
                })}
                <tr className="h-[27px]">
                  <td className="border-t-[3px] border-r border-b border-[#c8c8c8] border-t-[#e6e6e6] bg-[#eaeaea] p-0" />
                  <td colSpan={12} className="border-t-[3px] border-b border-[#c8c8c8] border-t-[#e0e0e0] p-0 pl-[3px]">Click here to add a new field.</td>
                </tr>
              </tbody>
            </table>
          </div>
          <div className="flex w-3 flex-col items-center pt-6 pr-px pb-0.5">
            <button aria-label="Scroll up"><Svg w={8} h={6}><path d="M0 6l4-6 4 6z" fill="#888" /></Svg></button>
            <div className="mt-0.5 flex w-2 flex-1 flex-col bg-[#dedede]">
              <div className="h-[44.5%]" />
              <div className="flex-1 bg-[#79bce8]" />
            </div>
            <button aria-label="Scroll down" className="mt-1"><Svg w={8} h={6}><path d="M0 0l4 6 4-6z" fill="#888" /></Svg></button>
          </div>
        </div>
      </div>
    </section>
  );
}

export default function App() {
  return (
    <div className="flex min-h-screen flex-col bg-[#f1f1f1] font-['Open_Sans','Noto_Sans_CJK_TC',sans-serif] text-[12px] leading-4 text-[#262626]">
      <Header />
      <main className="flex flex-1 gap-1.5 px-1.5 pt-1.5 pb-1.5">
        <Contents />
        <div className="flex min-w-0 flex-1 flex-col">
          <TablePane />
          <FieldsPane />
        </div>
      </main>
    </div>
  );
}
